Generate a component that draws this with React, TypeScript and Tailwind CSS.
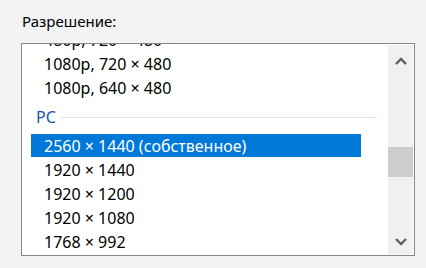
import React from 'react';

const font = { fontFamily: '"Noto Sans", "Open Sans", sans-serif' };

const rows = ['1920 × 1440', '1920 × 1200', '1920 × 1080', '1768 × 992'];

const Chevron = ({ up }: { up?: boolean }) => (
  <svg width="12" height="8" viewBox="0 0 12 8" className="block">
    <polyline
      points={up ? '1,7 6,2 11,7' : '1,1 6,6 11,1'}
      fill="none"
      stroke="#606060"
      strokeWidth="2.4"
      strokeLinejoin="miter"
    />
  </svg>
);

const App = () => {
  return (
    <div className="w-[426px] h-[268px] bg-[#f3f3f3] overflow-hidden text-black" style={font}>
      <div className="pl-[22px] pt-[11px] h-[43px] leading-[20px] text-[15px]">Разрешение:</div>

      <div className="ml-[21px] w-[394px] h-[213px] border border-[#828790] bg-white flex text-[16px]">
        {/* list */}
        <div className="flex-1 overflow-hidden">
          <div className="-mt-[16px]">
            <div className="h-[24px] flex items-center pl-[22px]">480p, 720 × 480</div>
            <div className="h-[24px] flex items-center pl-[22px]">1080p, 720 × 480</div>
            <div className="h-[24px] flex items-center pl-[22px]">1080p, 640 × 480</div>

            <div className="h-[34px] flex items-center pl-[14px] pr-[11px] gap-[5px]">
              <span className="text-[#1c4fa6]">PC</span>
              <div className="flex-1 h-px bg-[#dce3eb]" />
            </div>

            <div className="h-[24px]">
              <div className="ml-[9px] w-[330px] h-[23px] bg-[#0078d7] text-white flex items-center pl-[13px]">
                2560 × 1440 (собственное)
              </div>
            </div>

            {rows.map((r) => (
              <div key={r} className="h-[24px] flex items-center pl-[22px]">
                {r}
              </div>
            ))}
          </div>
        </div>

        {/* scrollbar */}
        <div className="w-[25px] my-px mr-px flex flex-col bg-[#f0f0f0]">
          <div className="h-[31px] flex items-center justify-center">
            <Chevron up />
          </div>
          <div className="h-[71px]" />
          <div className="h-[30px] bg-[#cdcdcd]" />
          <div className="flex-1" />
          <div className="h-[25px] flex items-center justify-center">
            <Chevron />
          </div>
        </div>
      </div>
    </div>
  );
};

export default App;
